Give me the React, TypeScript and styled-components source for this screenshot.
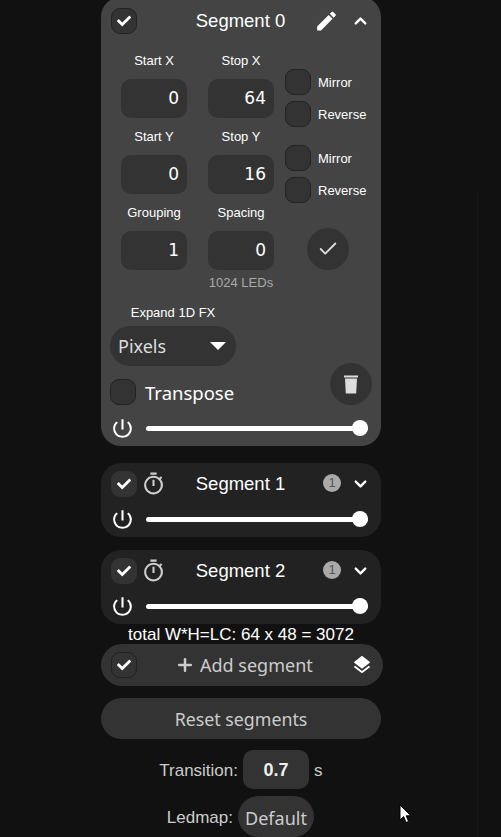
import React, { FC } from 'react'
import styled, { createGlobalStyle } from 'styled-components'
import { FaCheck } from 'react-icons/fa'
import { MdEdit, MdLayers, MdOutlineTimer, MdPowerSettingsNew } from 'react-icons/md'
import { FiChevronDown, FiChevronUp, FiPlus } from 'react-icons/fi'
import { LuCheck } from 'react-icons/lu'

const GlobalStyle = createGlobalStyle`
  html, body { margin: 0; padding: 0; background: #111; }
  body { font-family: "Liberation Sans", Arial, sans-serif; color: #fff; }
`

const Page = styled.div`
  position: relative;
  width: 501px;
  height: 837px;
  overflow: hidden;
  background: #111;
`
const Column = styled.div`
  width: 282px;
  margin-left: 101px;
  margin-top: -3px;
  display: flex;
  flex-direction: column;
  align-items: flex-start;
`
const Card = styled.div<{ $open?: boolean }>`
  width: 280px;
  box-sizing: border-box;
  height: ${p => (p.$open ? '449px' : '74px')};
  margin-bottom: ${p => (p.$open ? '17px' : '13px')};
  border-radius: 20px;
  background: ${p => (p.$open ? '#444' : '#222')};
  display: flex;
  flex-direction: column;
`
const Header = styled.div<{ $open?: boolean }>`
  display: flex;
  align-items: center;
  height: 24px;
  margin-top: ${p => (p.$open ? '12px' : '9px')};
  padding-left: 10px;
  position: relative;
`
const Title = styled.div`
  position: absolute;
  left: -1px;
  right: 0;
  top: 1px;
  text-align: center;
  font-size: 18.5px;
  pointer-events: none;
`
const Tick = styled.div<{ $bordered?: boolean; $bg?: string }>`
  width: 26px;
  height: 26px;
  box-sizing: border-box;
  border-radius: 9px;
  background: ${p => p.$bg || '#333'};
  border: ${p => (p.$bordered ? '1px solid #222' : 'none')};
  display: flex;
  align-items: center;
  justify-content: center;
  font-size: 14px;
  flex: none;
`
const IconSlot = styled.div<{ $left: number; $size: number; $color?: string }>`
  position: absolute;
  left: ${p => p.$left}px;
  top: 50%;
  transform: translateY(-50%);
  display: flex;
  font-size: ${p => p.$size}px;
  color: ${p => p.$color || '#fff'};
`
const Badge = styled.div`
  position: absolute;
  left: 222px;
  top: 2px;
  width: 18px;
  height: 18px;
  border-radius: 50%;
  background: #aaa;
  color: #555;
  font-size: 13px;
  line-height: 18px;
  text-align: center;
`
const Grid = styled.div`
  display: grid;
  grid-template-columns: 66px 66px 96px;
  column-gap: 21px;
  margin: 20px 0 0 20px;
  grid-auto-rows: 76px;
`
const Field = styled.div`
  display: flex;
  flex-direction: column;
  align-items: center;
`
const FieldLabel = styled.div`
  font-size: 13px;
  line-height: 16px;
  margin-bottom: 10px;
  color: #fff;
  white-space: nowrap;
`
const NumberBox = styled.div`
  width: 66px;
  height: 39px;
  box-sizing: border-box;
  border-radius: 10px;
  background: #333;
  font-family: "DejaVu Sans", sans-serif;
  font-size: 17px;
  line-height: 39px;
  text-align: right;
  padding-right: 8px;
  color: #fff;
`
const Flags = styled.div`
  margin-left: -10px;
  padding-top: 16px;
  display: flex;
  flex-direction: column;
  gap: 6px;
`
const Flag = styled.div`
  display: flex;
  align-items: center;
  gap: 7px;
  font-size: 13px;
  color: #fff;
`
const Round = styled.div`
  width: 42px;
  height: 42px;
  border-radius: 50%;
  background: #333;
  display: flex;
  align-items: center;
  justify-content: center;
  color: #ddd;
`
const ApplyCell = styled.div`
  padding: 23px 0 0 12px;
`
const Leds = styled.div`
  width: 100%;
  margin-top: -6px;
  text-align: center;
  font-size: 13px;
  line-height: 16px;
  color: #aaa;
`
const Footer = styled.div`
  margin: 14px 0 0 9px;
  position: relative;
`
const ExpandLabel = styled.div`
  width: 126px;
  text-align: center;
  font-size: 13px;
  line-height: 16px;
  color: #fff;
`
const Select = styled.div`
  margin-top: 5px;
  width: 126px;
  height: 40px;
  box-sizing: border-box;
  border-radius: 20px;
  background: #333;
  padding: 0 10px 0 8px;
  display: flex;
  align-items: center;
  justify-content: space-between;
  font-family: "Noto Sans", sans-serif;
  font-size: 18px;
  color: #ddd;
`
const Caret = styled.div`
  width: 0;
  height: 0;
  border-left: 8px solid transparent;
  border-right: 8px solid transparent;
  border-top: 8px solid #fff;
`
const TransposeRow = styled.div`
  margin-top: 13px;
  display: flex;
  align-items: center;
  gap: 9px;
  font-family: "Noto Sans", sans-serif;
  font-size: 18.5px;
  color: #fff;
`
const TrashButton = styled(Round)`
  position: absolute;
  left: 220px;
  top: 58px;
`
const PowerRow = styled.div`
  display: flex;
  align-items: center;
  margin: auto 0 7px 9px;
  height: 22px;
  font-size: 25px;
`
const Track = styled.div`
  position: relative;
  margin-left: 11px;
  width: 222px;
  height: 5px;
  border-radius: 3px;
  background: #fff;
`
const Thumb = styled.div`
  position: absolute;
  right: 0;
  top: -6px;
  width: 16px;
  height: 16px;
  border-radius: 50%;
  background: #fff;
`
const Total = styled.div`
  width: 280px;
  margin-top: -11px;
  text-align: center;
  font-size: 17px;
  line-height: 18px;
`
const AddBar = styled.div`
  position: relative;
  width: 282px;
  height: 42px;
  border-radius: 21px;
  background: #333;
  display: flex;
  align-items: center;
  padding-left: 10px;
  box-sizing: border-box;
`
const AddLabel = styled.div`
  position: absolute;
  left: 74px;
  display: flex;
  align-items: center;
  gap: 5px;
  font-family: "Noto Sans", sans-serif;
  font-size: 18px;
  color: #ccc;
`
const ResetButton = styled.div`
  margin-top: 12px;
  width: 280px;
  height: 41px;
  border-radius: 21px;
  background: #333;
  text-align: center;
  line-height: 42px;
  font-family: "Noto Sans", sans-serif;
  font-size: 17.8px;
  color: #ccc;
`
const Option = styled.div<{ $top: number; $labelWidth: number }>`
  margin-top: ${p => p.$top}px;
  display: flex;
  align-items: center;
  font-size: 17px;
  color: #ccc;
  & > span:first-child {
    width: ${p => p.$labelWidth}px;
    padding-top: 3px;
    text-align: right;
    white-space: nowrap;
  }
`
const TransitionBox = styled.div`
  width: 66px;
  height: 39px;
  margin: 0 5px 0 5px;
  border-radius: 10px;
  background: #333;
  text-align: center;
  line-height: 40px;
  font-size: 18px;
  font-weight: 700;
  color: #eee;
`
const Unit = styled.span`
  padding-top: 3px;
`
const LedmapPill = styled.div`
  margin-left: 5px;
  height: 41px;
  width: 76px;
  border-radius: 21px;
  background: #333;
  text-align: center;
  line-height: 44px;
  font-family: "Noto Sans", sans-serif;
  font-size: 18px;
  color: #ccc;
`
const ScrollLine = styled.div`
  position: absolute;
  left: 477px;
  top: 190px;
  bottom: 0;
  width: 1px;
  background: #181818;
`
const Cursor = styled.svg`
  position: absolute;
  left: 399px;
  top: 804px;
`

const Power: FC = () => (
  <PowerRow>
    <MdPowerSettingsNew />
    <Track><Thumb /></Track>
  </PowerRow>
)

const CollapsedCard: FC<{ name: string }> = ({ name }) => (
  <Card>
    <Header>
      <Tick><FaCheck /></Tick>
      <Title>{name}</Title>
      <IconSlot $left={40} $size={25} $color="#ccc"><MdOutlineTimer /></IconSlot>
      <Badge>1</Badge>
      <IconSlot $left={250} $size={19}><FiChevronDown strokeWidth={3} /></IconSlot>
    </Header>
    <Power />
  </Card>
)

const FlagPair: FC = () => (
  <Flags>
    <Flag><Tick $bordered />Mirror</Flag>
    <Flag><Tick $bordered />Reverse</Flag>
  </Flags>
)

const NumberField: FC<{ label: string; value: number }> = ({ label, value }) => (
  <Field>
    <FieldLabel>{label}</FieldLabel>
    <NumberBox>{value}</NumberBox>
  </Field>
)

const App: FC = () => (
  <Page>
    <GlobalStyle />
    <Column>
      <Card $open>
        <Header $open>
          <Tick $bordered><FaCheck /></Tick>
          <Title>Segment 0</Title>
          <IconSlot $left={213} $size={25}><MdEdit /></IconSlot>
          <IconSlot $left={250} $size={19}><FiChevronUp strokeWidth={3} /></IconSlot>
        </Header>
        <Grid>
          <NumberField label="Start X" value={0} />
          <NumberField label="Stop X" value={64} />
          <FlagPair />
          <NumberField label="Start Y" value={0} />
          <NumberField label="Stop Y" value={16} />
          <FlagPair />
          <NumberField label="Grouping" value={1} />
          <NumberField label="Spacing" value={0} />
          <ApplyCell>
            <Round><LuCheck size={22} /></Round>
          </ApplyCell>
        </Grid>
        <Leds>1024 LEDs</Leds>
        <Footer>
          <ExpandLabel>Expand 1D FX</ExpandLabel>
          <Select>Pixels<Caret /></Select>
          <TransposeRow><Tick $bordered />Transpose</TransposeRow>
          <TrashButton>
            <svg width="16" height="20" viewBox="0 0 16 20" fill="#ddd">
              <path d="M1 1.5h14v2H1zM2 4.5h12l-.8 15H2.8z" />
            </svg>
          </TrashButton>
        </Footer>
        <Power />
      </Card>
      <CollapsedCard name="Segment 1" />
      <CollapsedCard name="Segment 2" />
      <Total>total W*H=LC: 64 x 48 = 3072</Total>
      <AddBar>
        <Tick $bordered><FaCheck /></Tick>
        <AddLabel><FiPlus size={20} strokeWidth={3} />Add segment</AddLabel>
        <IconSlot $left={250} $size={22}><MdLayers /></IconSlot>
      </AddBar>
      <ResetButton>Reset segments</ResetButton>
      <Option $top={11} $labelWidth={137}>
        <span>Transition:</span>
        <TransitionBox>0.7</TransitionBox>
        <Unit>s</Unit>
      </Option>
      <Option $top={7} $labelWidth={132}>
        <span>Ledmap:</span>
        <LedmapPill>Default</LedmapPill>
      </Option>
    </Column>
    <ScrollLine />
    <Cursor width="13" height="20" viewBox="0 0 13 20">
      <path d="M1 1v15l3.6-3.4L7 18.5l2.6-1.1-2.4-5.6H12z" fill="#fff" stroke="#000" strokeWidth="1" />
    </Cursor>
  </Page>
)

export default App
